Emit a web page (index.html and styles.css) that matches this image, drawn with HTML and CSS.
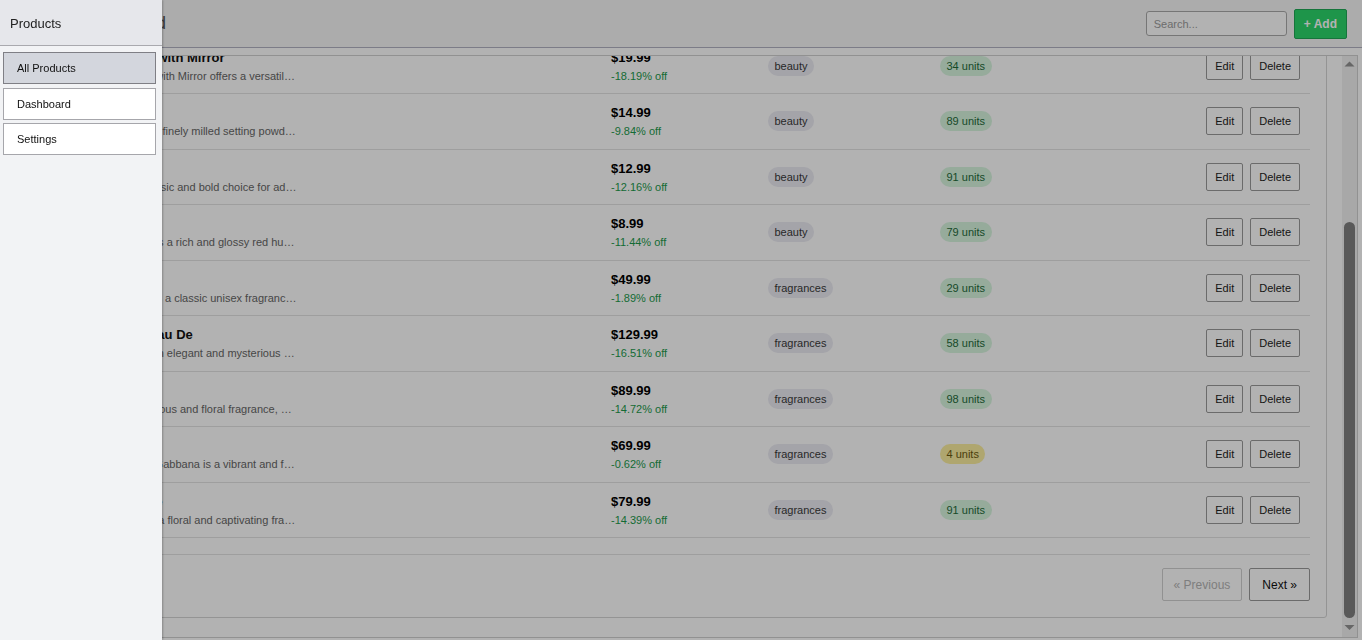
FILE: index.html
```html
<!DOCTYPE html>
<html lang="en">
<head>
<meta charset="utf-8">
<title>Products</title>
<link rel="stylesheet" href="styles.css">
</head>
<body>
<div class="app">
  <header class="topbar">
    <h1 class="brand">Admin Dashboard</h1>
    <div class="top-actions">
      <input class="search" type="text" placeholder="Search...">
      <button class="btn-add">+ Add</button>
    </div>
  </header>
  <main class="main">
    <div class="viewport">
      <div class="scroller">
        <div class="scroll-inner">
          <section class="card">
            <div class="card-head">
              <h2>Products</h2>
              <p>Showing 1–10 of 194 products</p>
            </div>
            <table class="products">
              <colgroup>
                <col class="c-name"><col class="c-price"><col class="c-cat"><col class="c-stock"><col class="c-act">
              </colgroup>
              <thead>
                <tr><th>Product</th><th>Price</th><th>Category</th><th>Stock</th><th class="th-act">Actions</th></tr>
              </thead>
              <tbody>
                <tr>
                  <td><div class="p-name">Essence Mascara Lash Princess</div><div class="p-desc">The Essence Mascara Lash Princess is a popular mascara known for its volumizing and lengthening effects.</div></td>
                  <td><div class="price">$9.99</div><div class="off">-7.17% off</div></td>
                  <td><span class="badge badge-cat">beauty</span></td>
                  <td><span class="badge badge-low">5 units</span></td>
                  <td class="td-act"><div class="actions"><button class="act">Edit</button><button class="act">Delete</button></div></td>
                </tr>
                <tr>
                  <td><div class="p-name">Eyeshadow Palette with Mirror</div><div class="p-desc">The Eyeshadow Palette with Mirror offers a versatile range of eyeshadow shades for creating stunning eye looks.</div></td>
                  <td><div class="price">$19.99</div><div class="off">-18.19% off</div></td>
                  <td><span class="badge badge-cat">beauty</span></td>
                  <td><span class="badge badge-ok">34 units</span></td>
                  <td class="td-act"><div class="actions"><button class="act">Edit</button><button class="act">Delete</button></div></td>
                </tr>
                <tr>
                  <td><div class="p-name">Powder Canister</div><div class="p-desc">The Powder Canister is a finely milled setting powder designed to set makeup and control shine.</div></td>
                  <td><div class="price">$14.99</div><div class="off">-9.84% off</div></td>
                  <td><span class="badge badge-cat">beauty</span></td>
                  <td><span class="badge badge-ok">89 units</span></td>
                  <td class="td-act"><div class="actions"><button class="act">Edit</button><button class="act">Delete</button></div></td>
                </tr>
                <tr>
                  <td><div class="p-name">Red Lipstick</div><div class="p-desc">The Red Lipstick is a classic and bold choice for adding a pop of color to your lips.</div></td>
                  <td><div class="price">$12.99</div><div class="off">-12.16% off</div></td>
                  <td><span class="badge badge-cat">beauty</span></td>
                  <td><span class="badge badge-ok">91 units</span></td>
                  <td class="td-act"><div class="actions"><button class="act">Edit</button><button class="act">Delete</button></div></td>
                </tr>
                <tr>
                  <td><div class="p-name">Red Nail Polish</div><div class="p-desc">The Red Nail Polish offers a rich and glossy red hue for vibrant and polished nails.</div></td>
                  <td><div class="price">$8.99</div><div class="off">-11.44% off</div></td>
                  <td><span class="badge badge-cat">beauty</span></td>
                  <td><span class="badge badge-ok">79 units</span></td>
                  <td class="td-act"><div class="actions"><button class="act">Edit</button><button class="act">Delete</button></div></td>
                </tr>
                <tr>
                  <td><div class="p-name">Calvin Klein CK One</div><div class="p-desc">CK One by Calvin Klein is a classic unisex fragrance, known for its fresh and clean scent.</div></td>
                  <td><div class="price">$49.99</div><div class="off">-1.89% off</div></td>
                  <td><span class="badge badge-cat">fragrances</span></td>
                  <td><span class="badge badge-ok">29 units</span></td>
                  <td class="td-act"><div class="actions"><button class="act">Edit</button><button class="act">Delete</button></div></td>
                </tr>
                <tr>
                  <td><div class="p-name">Chanel Coco Noir Eau De</div><div class="p-desc">Coco Noir by Chanel is an elegant and mysterious fragrance, featuring notes of grapefruit, rose, and sandalwood.</div></td>
                  <td><div class="price">$129.99</div><div class="off">-16.51% off</div></td>
                  <td><span class="badge badge-cat">fragrances</span></td>
                  <td><span class="badge badge-ok">58 units</span></td>
                  <td class="td-act"><div class="actions"><button class="act">Edit</button><button class="act">Delete</button></div></td>
                </tr>
                <tr>
                  <td><div class="p-name">Dior J'adore</div><div class="p-desc">J'adore by Dior is a luxurious and floral fragrance, known for its blend of ylang-ylang, rose, and jasmine.</div></td>
                  <td><div class="price">$89.99</div><div class="off">-14.72% off</div></td>
                  <td><span class="badge badge-cat">fragrances</span></td>
                  <td><span class="badge badge-ok">98 units</span></td>
                  <td class="td-act"><div class="actions"><button class="act">Edit</button><button class="act">Delete</button></div></td>
                </tr>
                <tr>
                  <td><div class="p-name">Dolce Shine Eau de</div><div class="p-desc">Dolce Shine by Dolce &amp; Gabbana is a vibrant and fruity fragrance, featuring notes of mango, jasmine, and blonde woods.</div></td>
                  <td><div class="price">$69.99</div><div class="off">-0.62% off</div></td>
                  <td><span class="badge badge-cat">fragrances</span></td>
                  <td><span class="badge badge-low">4 units</span></td>
                  <td class="td-act"><div class="actions"><button class="act">Edit</button><button class="act">Delete</button></div></td>
                </tr>
                <tr>
                  <td><div class="p-name">Gucci Bloom Eau de</div><div class="p-desc">Gucci Bloom by Gucci is a floral and captivating fragrance, with notes of tuberose, jasmine, and Rangoon creeper.</div></td>
                  <td><div class="price">$79.99</div><div class="off">-14.39% off</div></td>
                  <td><span class="badge badge-cat">fragrances</span></td>
                  <td><span class="badge badge-ok">91 units</span></td>
                  <td class="td-act"><div class="actions"><button class="act">Edit</button><button class="act">Delete</button></div></td>
                </tr>
              </tbody>
            </table>
            <div class="pager">
              <button class="pg-btn" disabled>« Previous</button>
              <button class="pg-btn">Next »</button>
            </div>
          </section>
        </div>
      </div>
      <div class="vscroll" aria-hidden="true">
        <span class="sb-btn"><svg width="15" height="15" viewBox="0 0 15 15"><path d="M2.5 10.5 L7.5 5.5 L12.5 10.5 Z"/></svg></span>
        <span class="sb-track"><span class="sb-thumb"></span></span>
        <span class="sb-btn"><svg width="15" height="15" viewBox="0 0 15 15"><path d="M2.5 3 L12.5 3 L7.5 8 Z"/></svg></span>
      </div>
    </div>
  </main>
</div>
<div class="backdrop"></div>
<aside class="drawer">
  <div class="drawer-head">Products</div>
  <nav class="drawer-nav">
    <a class="nav-item active" href="#">All Products</a>
    <a class="nav-item" href="#">Dashboard</a>
    <a class="nav-item" href="#">Settings</a>
  </nav>
</aside>
</body>
</html>
```
FILE: styles.css
```css
* { box-sizing: border-box; }
html, body { margin: 0; height: 100%; }
body {
  font-family: "Liberation Sans", Arial, sans-serif;
  font-size: 12px;
  color: #222;
  background: #fff;
  overflow: hidden;
}
button, input { font-family: inherit; }

.app { height: 100vh; display: flex; flex-direction: column; }

/* top bar */
.topbar {
  height: 48px;
  flex-shrink: 0;
  display: flex;
  align-items: center;
  justify-content: space-between;
  padding: 0 15px 0 22px;
  background: #f6f6f7;
  border-bottom: 1px solid #b2b2c2;
}
.brand { margin: 0; font-size: 18px; font-weight: 400; color: #555; }
.top-actions { display: flex; align-items: center; gap: 7px; }
.search {
  width: 141px; height: 25px;
  border: 1px solid #aaa; border-radius: 3px;
  padding: 0 7px; font-size: 11px; color: #333; background: #fff;
}
.search::placeholder { color: #9c9c9c; }
.btn-add {
  height: 30px; padding: 0 9px;
  border: 1px solid #20a857; border-radius: 2px;
  background: #2bd66b; color: #fff;
  font-size: 12px; font-weight: 700;
}

/* main scroll area */
.main { flex: 1; min-height: 0; display: flex; padding: 7px 4px 2px 4px; }
.viewport {
  flex: 1;
  min-width: 0;
  display: flex;
  border: 1px solid #d0d0d0;
}
.scroller {
  flex: 1;
  min-width: 0;
  overflow: hidden;
  display: flex;
  flex-direction: column-reverse;
}
.scroll-inner { flex-shrink: 0; padding: 14px 15px 19px 6px; }

/* drawn scrollbar */
.vscroll {
  width: 15px;
  flex-shrink: 0;
  display: flex;
  flex-direction: column;
  background: #f1f1f1;
}
.sb-btn { display: block; height: 15px; flex-shrink: 0; }
.sb-btn svg { display: block; fill: #929292; }
.sb-track {
  flex: 1;
  display: flex;
  flex-direction: column;
  justify-content: flex-end;
  padding: 0 2px 4px;
}
.sb-thumb {
  display: block;
  height: 396px;
  border-radius: 6px;
  background: #808080;
}

/* card */
.card {
  border: 1px solid #d4d4d4;
  border-radius: 3px;
  padding: 16px;
  background: #fff;
}
.card-head {
  padding-bottom: 16px;
  margin-bottom: 15px;
  border-bottom: 1px solid #e3e3e3;
}
.card-head h2 { margin: 0; font-size: 18px; line-height: 24px; color: #111; }
.card-head p { margin: 4px 0 0; font-size: 12px; line-height: 18px; color: #777; }

/* table */
.products {
  width: 100%;
  table-layout: fixed;
  border-collapse: separate;
  border-spacing: 0;
  margin-bottom: 16px;
}
.c-name { width: 575px; }
.c-price { width: 157px; }
.c-cat { width: 172px; }
.c-stock { width: 266px; }
.c-act { width: 112px; }
.products th {
  text-align: left;
  font-size: 11px; font-weight: 700; line-height: 16px;
  color: #666; text-transform: uppercase;
  padding: 10px 8px;
  border-bottom: 1px solid #d6d6d6;
}
.products th.th-act { text-align: right; padding-right: 10px; }
.products td {
  padding: 9px 8px;
  border-bottom: 1px solid #e3e3e3;
  vertical-align: middle;
}
.products td.td-act { padding-right: 10px; }

.p-name {
  font-size: 13px; font-weight: 700; line-height: 20px; color: #111;
  white-space: nowrap; overflow: hidden; text-overflow: ellipsis; max-width: 261px;
}
.p-desc {
  font-size: 11px; line-height: 16.5px; color: #666;
  white-space: nowrap; overflow: hidden; text-overflow: ellipsis; max-width: 261px;
}
.price { font-size: 13px; font-weight: 700; line-height: 20px; color: #000; }
.off { font-size: 11px; line-height: 16.5px; color: #1c9a4c; }

.badge {
  display: inline-block;
  font-size: 11px; line-height: 14px;
  padding: 3px 6.5px;
  border-radius: 10px;
}
.badge-cat { background: #ebebf3; color: #3a3a3a; }
.badge-ok { background: #d7f5df; color: #1f6b3a; }
.badge-low { background: #fbeea0; color: #6b5a10; }

.actions { display: flex; justify-content: flex-end; gap: 7px; }
.act {
  height: 28px; padding: 0 8px;
  font-size: 11px; color: #222;
  background: #fff;
  border: 1px solid #9a9a9a; border-radius: 2px;
}

/* pager */
.pager {
  display: flex; justify-content: flex-end; gap: 7px;
  border-top: 1px solid #e3e3e3;
  padding-top: 13px;
}
.pg-btn {
  height: 33px; padding: 0 12px;
  font-size: 12px; color: #111;
  background: #fff;
  border: 1px solid #9a9a9a; border-radius: 2px;
}
.pg-btn:disabled { padding: 0 11px; color: #b5b5b5; border-color: #d0d0d0; }

/* overlay + drawer */
.backdrop { position: fixed; inset: 0; background: rgba(0, 0, 0, 0.3); z-index: 10; }
.drawer {
  position: fixed; left: 0; top: 0; bottom: 0;
  width: 162px;
  background: #f2f3f5;
  z-index: 20;
  box-shadow: 1px 0 2px rgba(0, 0, 0, 0.25);
}
.drawer-head {
  height: 46px;
  display: flex; align-items: center;
  padding: 1px 10px 0;
  background: #e6e7eb;
  border-bottom: 1px solid #a9a9ae;
  font-size: 13px; color: #222;
}
.drawer-nav { display: flex; flex-direction: column; gap: 3px; padding: 6px 6px 0 3px; }
.nav-item {
  display: block;
  height: 32px; line-height: 30px;
  padding: 0 13px;
  border: 1px solid #a6a6ab;
  background: #fff;
  font-size: 11px; color: #111;
  text-decoration: none;
}
.nav-item.active { background: #d3d6dd; border-color: #7f7f85; margin-bottom: 1px; }
```
